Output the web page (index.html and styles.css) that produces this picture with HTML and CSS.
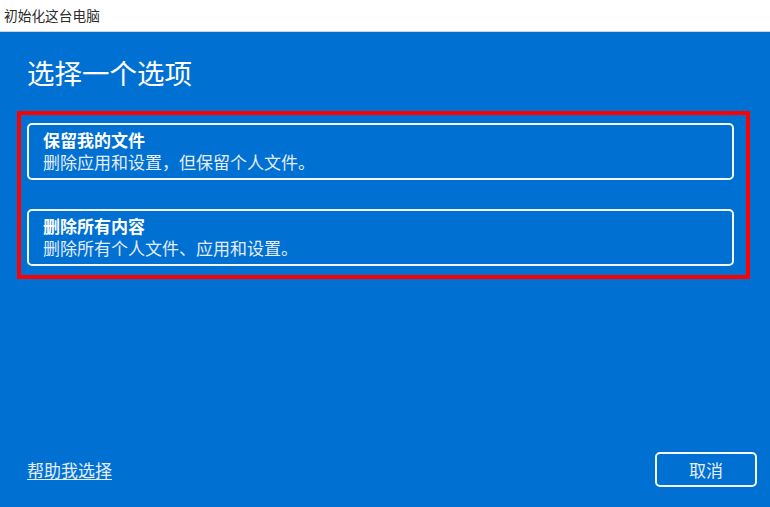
FILE: index.html
```html
<!DOCTYPE html>
<html lang="zh-CN">
<head>
<meta charset="utf-8">
<title>初始化这台电脑</title>
<link rel="stylesheet" href="styles.css">
</head>
<body>
<div class="window">
  <div class="titlebar">初始化这台电脑</div>
  <div class="main">
    <h1 class="heading">选择一个选项</h1>
    <div class="highlight">
      <div class="option">
        <div class="option-title">保留我的文件</div>
        <div class="option-desc">删除应用和设置，但保留个人文件。</div>
      </div>
      <div class="option">
        <div class="option-title">删除所有内容</div>
        <div class="option-desc">删除所有个人文件、应用和设置。</div>
      </div>
    </div>
    <div class="spacer"></div>
    <div class="footer">
      <a class="help" href="#">帮助我选择</a>
      <button class="cancel" type="button">取消</button>
    </div>
  </div>
</div>
</body>
</html>
```
FILE: styles.css
```css
html, body {
  margin: 0;
  padding: 0;
}
body {
  font-family: "Noto Sans CJK SC", "Noto Sans", sans-serif;
  width: 770px;
  height: 507px;
  overflow: hidden;
}
.window {
  display: flex;
  flex-direction: column;
  height: 507px;
}
.titlebar {
  height: 31px;
  border-bottom: 1px solid #c9d4e0;
  background: #ffffff;
  color: #2b2b2b;
  font-size: 13.7px;
  line-height: 31px;
  padding-left: 4px;
}
.main {
  flex: 1;
  background: #0070d2;
  display: flex;
  flex-direction: column;
  color: #ffffff;
}
.heading {
  margin: 26px 0 0 27px;
  font-size: 27.5px;
  font-weight: 400;
  line-height: 28px;
}
.highlight {
  margin: 25px 0 0 17px;
  width: 733px;
  box-sizing: border-box;
  border: 4px solid #ff0000;
  padding: 8px 12px 9px 6px;
  display: flex;
  flex-direction: column;
  gap: 29px;
}
.option {
  border: 2px solid #f2f7fd;
  border-radius: 5px;
  padding: 6px 14px 3px 14px;
  height: 57px;
  box-sizing: border-box;
  font-family: "Liberation Sans", "Noto Sans CJK SC", sans-serif;
}
.option-title {
  font-size: 17px;
  font-weight: 700;
  line-height: 22px;
}
.option-desc {
  font-size: 17px;
  line-height: 22px;
  color: #e4eefa;
}
.spacer {
  flex: 1;
}
.footer {
  display: flex;
  align-items: center;
  justify-content: space-between;
  padding: 0 13px 20px 27px;
}
.help {
  color: #e4eefa;
  font-size: 17px;
  line-height: 22px;
  text-decoration: underline;
  text-underline-offset: 2px;
}
.cancel {
  width: 102px;
  height: 35px;
  background: transparent;
  border: 2px solid #f2f7fd;
  border-radius: 5px;
  color: #e8f1fb;
  font-family: "Noto Sans CJK SC", "Noto Sans", sans-serif;
  font-size: 17px;
  padding: 0;
}
```
